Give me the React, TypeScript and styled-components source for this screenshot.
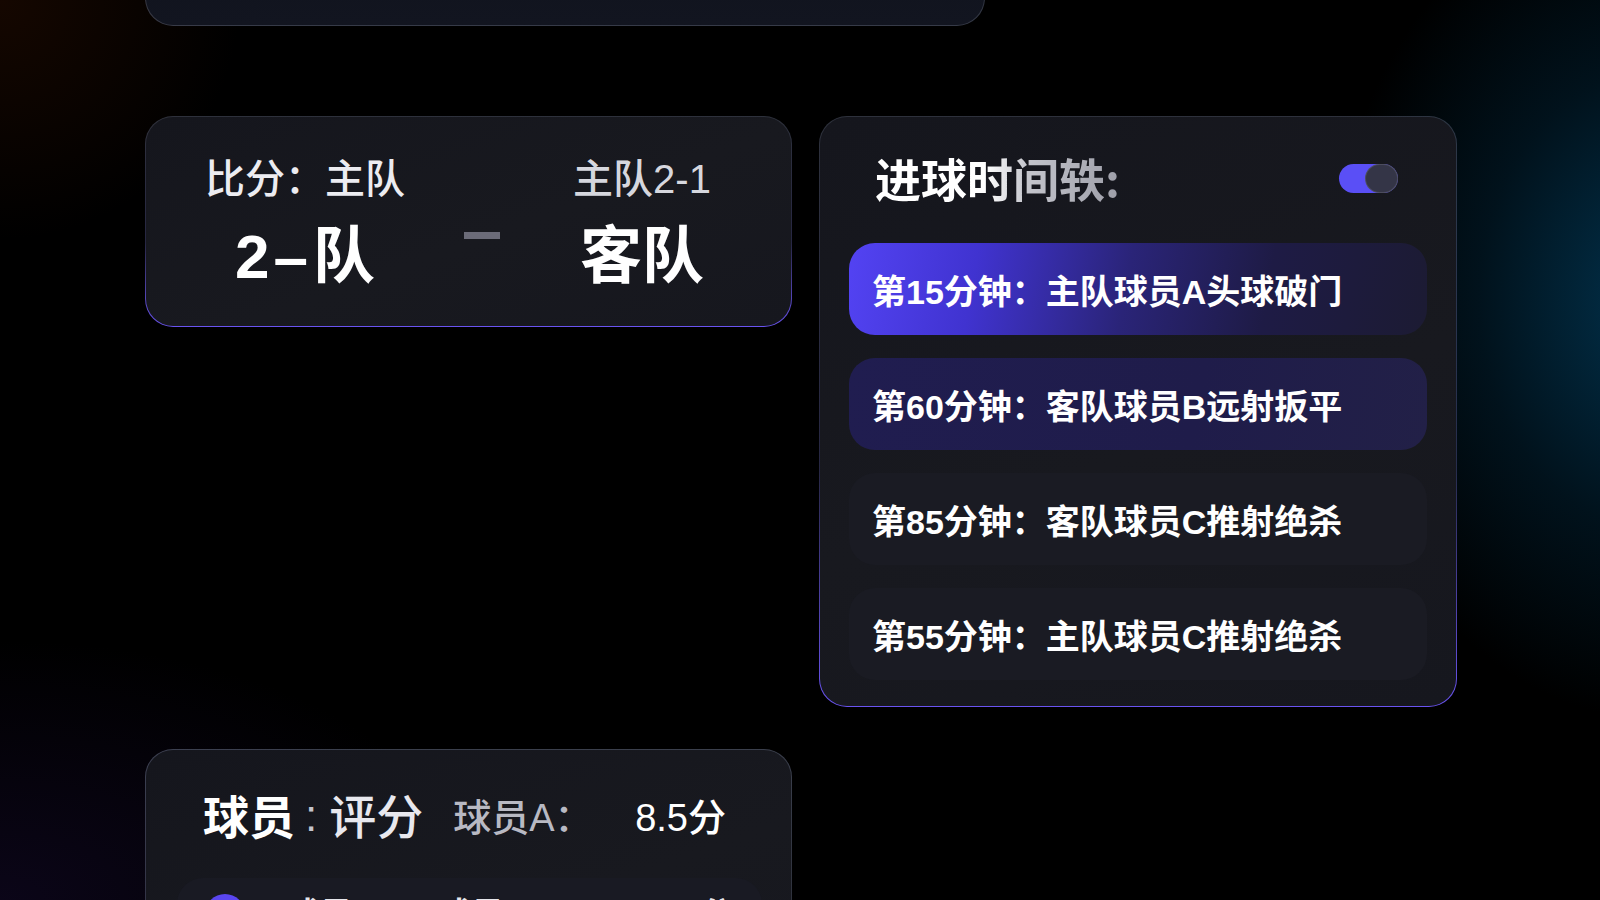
import React from 'react';
import styled, { createGlobalStyle } from 'styled-components';

const GlobalStyle = createGlobalStyle`
  html, body {
    margin: 0;
    padding: 0;
    background: #000;
    overflow: hidden;
  }
  body {
    font-family: "Liberation Sans", "Noto Sans CJK SC", "Noto Sans", sans-serif;
    color: #fff;
  }
`;

const Page = styled.main`
  width: 1600px;
  height: 900px;
  box-sizing: border-box;
  padding-left: 145px;
  background:
    radial-gradient(ellipse 330px 420px at 1660px 300px, rgba(2, 56, 86, 0.9), rgba(2, 40, 62, 0.45) 55%, transparent 100%),
    radial-gradient(circle at 0 0, rgba(60, 20, 0, 0.35), transparent 240px),
    radial-gradient(ellipse 480px 260px at 0 900px, rgba(36, 18, 80, 0.3), transparent 100%),
    #000;
  overflow: hidden;
`;

const glass = `
  border: 1px solid transparent;
  box-sizing: border-box;
  border-radius: 28px;
`;

const TopPanel = styled.section`
  ${glass}
  width: 840px;
  height: 126px;
  margin-top: -100px;
  background:
    linear-gradient(180deg, #0f121b, #121520) padding-box,
    linear-gradient(180deg, rgba(120, 130, 160, 0.2), rgba(120, 130, 160, 0.45)) border-box;
`;

const Board = styled.div`
  display: grid;
  grid-template-columns: 647px 638px;
  column-gap: 27px;
  row-gap: 42px;
  align-items: start;
  margin-top: 90px;
`;

const Card = styled.section<{ $glow?: boolean }>`
  ${glass}
  background:
    linear-gradient(160deg, #15161d 0%, #18191f 55%, #16171e 100%) padding-box,
    ${(p) =>
      p.$glow
        ? 'linear-gradient(180deg, rgba(130, 140, 170, 0.35) 0%, rgba(110, 110, 190, 0.35) 60%, rgba(112, 88, 255, 0.95) 100%) border-box'
        : 'linear-gradient(180deg, rgba(130, 140, 170, 0.45) 0%, rgba(110, 115, 140, 0.3) 100%) border-box'};
`;

/* score card */

const ScoreCard = styled(Card)`
  grid-column: 1;
  grid-row: 1;
  height: 211px;
  display: grid;
  grid-template-columns: 206px 1fr 150px;
  align-items: center;
  padding: 0 74px 0 56px;
`;

const Side = styled.div`
  display: flex;
  flex-direction: column;
  align-items: center;
  gap: 19px;
  margin-top: 4px;
`;

const SideLabel = styled.div<{ $dim?: boolean }>`
  font-size: 40px;
  line-height: 48px;
  font-weight: 500;
  color: ${(p) => (p.$dim ? '#d6d7de' : '#ececf1')};
  white-space: nowrap;
`;

const SideScore = styled.div`
  font-size: 62px;
  line-height: 70px;
  font-weight: 700;
  color: #fff;
  white-space: nowrap;
`;

const ScoreDash = styled.span`
  letter-spacing: 5px;
  margin-left: 4px;
`;

const Dash = styled.div`
  justify-self: center;
  width: 36px;
  height: 7px;
  margin: 28px 12px 0 0;
  background: #6b6b78;
`;

/* timeline card */

const TimelineCard = styled(Card)`
  grid-column: 2;
  grid-row: 1;
  display: flex;
  flex-direction: column;
  padding: 32px 29px 26px;
`;

const TimelineHead = styled.header`
  display: flex;
  align-items: center;
  justify-content: space-between;
  padding: 0 29px 0 26px;
  margin-bottom: 38px;
`;

const Title = styled.h2`
  margin: 0;
  font-size: 46px;
  line-height: 56px;
  font-weight: 700;
  font-family: "Noto Sans CJK SC", sans-serif;
  background: linear-gradient(90deg, #ffffff 0%, #ffffff 45%, #c4c5cc 62%, #9d9ea8 100%);
  -webkit-background-clip: text;
  background-clip: text;
  color: transparent;
`;

const Toggle = styled.div`
  position: relative;
  width: 59px;
  height: 29px;
  margin-top: 3px;
  border-radius: 15px;
  background: #5a4ff6;
`;

const Knob = styled.span`
  position: absolute;
  right: 0;
  top: 0;
  width: 33px;
  height: 29px;
  box-sizing: border-box;
  border-radius: 15px;
  background: #343547;
  border: 1px solid rgba(255, 255, 255, 0.12);
`;

const Events = styled.ul`
  list-style: none;
  margin: 0;
  padding: 0;
  display: flex;
  flex-direction: column;
  gap: 23px;
`;

type Tone = 'active' | 'recent' | 'plain';

const eventBg: Record<Tone, string> = {
  active: 'linear-gradient(100deg, #5343f3 0%, #4033d0 22%, #2a2478 48%, #1e1b45 72%, #1c1b33 100%)',
  recent: 'linear-gradient(100deg, #201d50 0%, #1f1c4a 60%, #222047 100%)',
  plain: '#1a1b23',
};

const EventItem = styled.li<{ $tone: Tone }>`
  height: 92px;
  display: flex;
  align-items: center;
  padding-left: 23px;
  border-radius: 26px;
  background: ${(p) => eventBg[p.$tone]};
  font-size: 34px;
  font-weight: 700;
  color: #fff;
  white-space: nowrap;
`;

/* player rating card */

const RatingCard = styled(Card)`
  grid-column: 1;
  grid-row: 2;
  height: 320px;
  padding: 33px 29px 0 31px;
`;

const RatingHead = styled.header`
  display: flex;
  align-items: center;
  padding: 0 36px 0 26px;
  white-space: nowrap;
`;

const HeadStrong = styled.span`
  font-family: "Noto Sans CJK SC", sans-serif;
  font-size: 46px;
  line-height: 58px;
  font-weight: 700;
  color: #fff;
`;

const HeadColon = styled.span`
  font-size: 44px;
  line-height: 58px;
  color: #c4c5ce;
  margin: 4px 12px 0 10px;
`;

const HeadSoft = styled.span`
  font-family: "Noto Sans CJK SC", sans-serif;
  font-size: 47px;
  line-height: 58px;
  font-weight: 500;
  color: #e8e8ee;
`;

const PlayerName = styled.span`
  font-size: 38px;
  font-weight: 500;
  color: #b8b9c3;
  margin-left: 30px;
`;

const PlayerScore = styled.span`
  font-size: 38px;
  font-weight: 500;
  color: #fff;
  margin-left: auto;
`;

const PlayerRow = styled.div`
  display: flex;
  align-items: flex-start;
  margin-top: 33px;
  height: 90px;
  padding: 16px 28px 0 28px;
  border-radius: 26px;
  background: #191a23;
  font-size: 34px;
  font-weight: 700;
  color: #e6e6ec;
  white-space: nowrap;
`;

const Avatar = styled.span`
  width: 40px;
  height: 40px;
  border-radius: 50%;
  background: #5a46f0;
  flex-shrink: 0;
  margin-right: 40px;
`;

const RowCell = styled.span<{ $w?: number }>`
  width: ${(p) => (p.$w ? `${p.$w}px` : 'auto')};
  line-height: 42px;
`;

const events: { text: string; tone: Tone }[] = [
  { text: '第15分钟：主队球员A头球破门', tone: 'active' },
  { text: '第60分钟：客队球员B远射扳平', tone: 'recent' },
  { text: '第85分钟：客队球员C推射绝杀', tone: 'plain' },
  { text: '第55分钟：主队球员C推射绝杀', tone: 'plain' },
];

export default function App() {
  return (
    <>
      <GlobalStyle />
      <Page>
        <TopPanel />
        <Board>
          <ScoreCard $glow>
            <Side>
              <SideLabel>比分：主队</SideLabel>
              <SideScore>
                2<ScoreDash>–</ScoreDash>队
              </SideScore>
            </Side>
            <Dash />
            <Side>
              <SideLabel $dim>主队2-1</SideLabel>
              <SideScore>客队</SideScore>
            </Side>
          </ScoreCard>

          <TimelineCard $glow>
            <TimelineHead>
              <Title>进球时间轶:</Title>
              <Toggle>
                <Knob />
              </Toggle>
            </TimelineHead>
            <Events>
              {events.map((e) => (
                <EventItem key={e.text} $tone={e.tone}>
                  {e.text}
                </EventItem>
              ))}
            </Events>
          </TimelineCard>

          <RatingCard>
            <RatingHead>
              <HeadStrong>球员</HeadStrong>
              <HeadColon>:</HeadColon>
              <HeadSoft>评分</HeadSoft>
              <PlayerName>球员A：</PlayerName>
              <PlayerScore>8.5分</PlayerScore>
            </RatingHead>
            <PlayerRow>
              <Avatar />
              <RowCell $w={168}>球员B</RowCell>
              <RowCell $w={240}>球员B：</RowCell>
              <RowCell>7.9分</RowCell>
            </PlayerRow>
          </RatingCard>
        </Board>
      </Page>
    </>
  );
}
